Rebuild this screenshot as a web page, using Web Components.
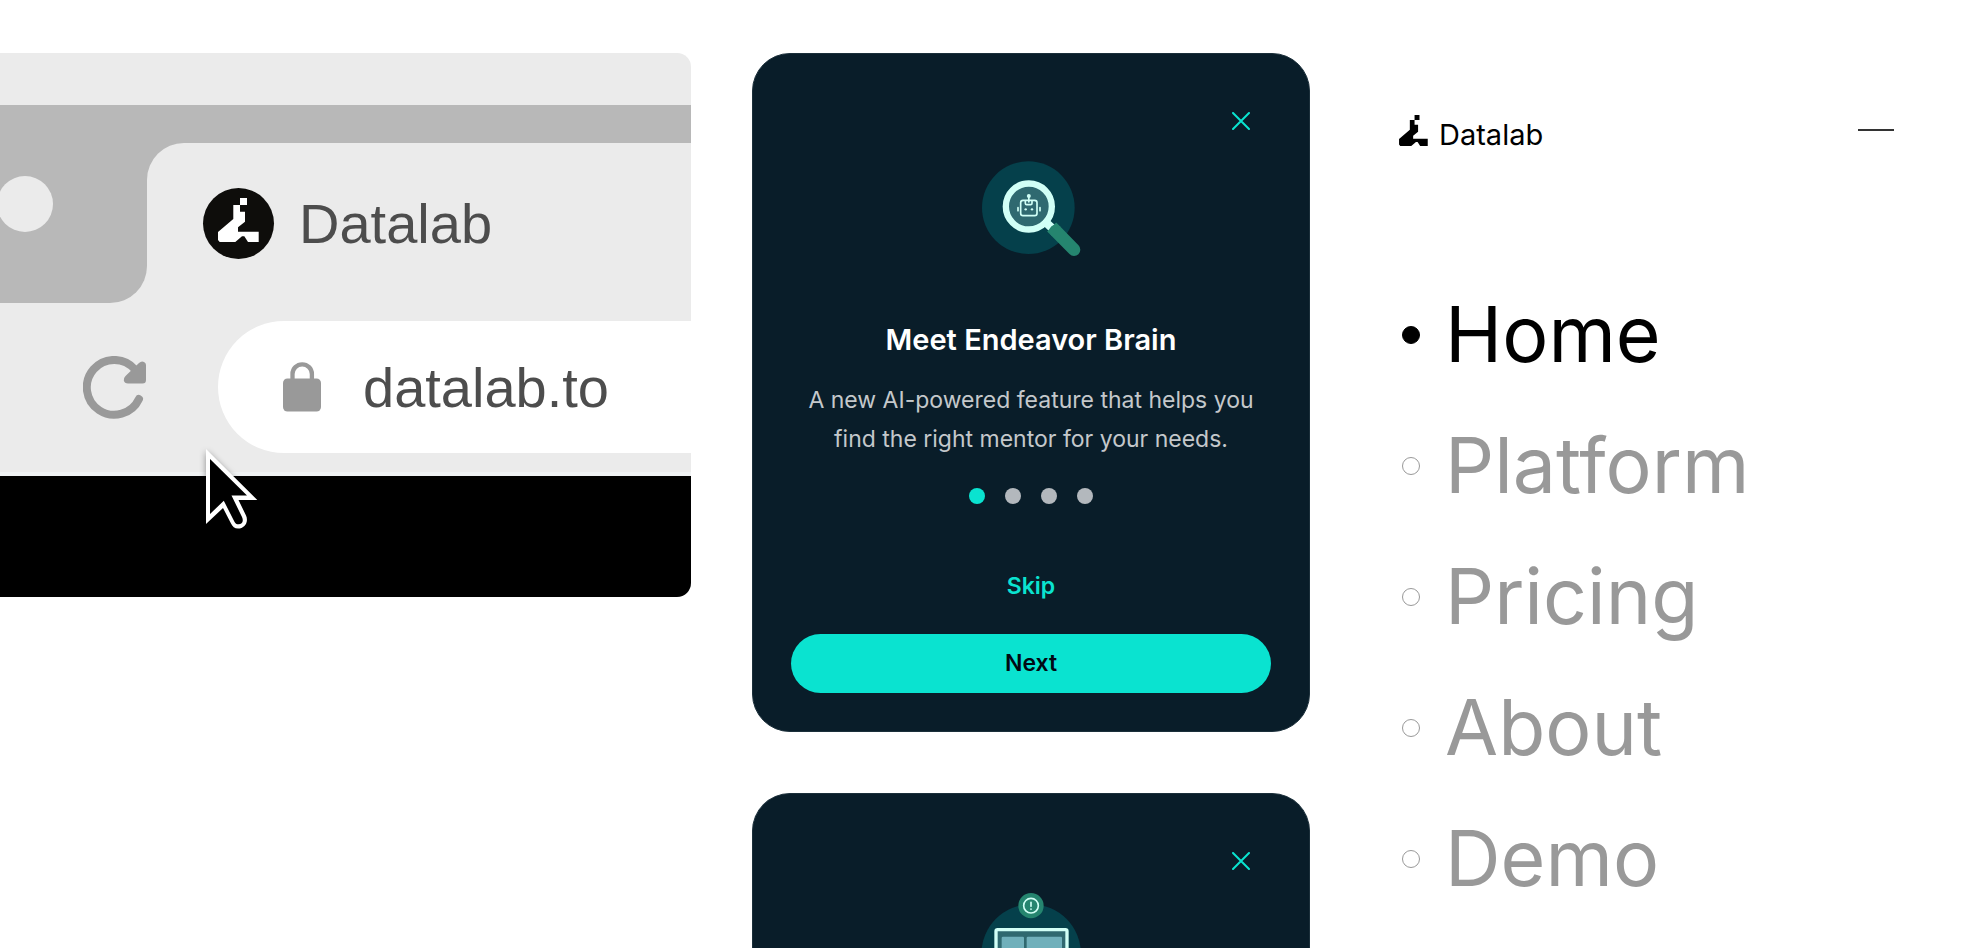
<!DOCTYPE html>
<html lang="en">
<head>
  <meta charset="utf-8">
  <meta name="viewport" content="width=device-width, initial-scale=1">
  <title>Datalab</title>
  <style>
    body {
      margin: 0;
      background-color: #ffffff;
      font-family: Inter, "Liberation Sans", sans-serif;
    }
  </style>
</head>
<body>
  <showcase-board>
    <browser-preview slot="browser" tab-title="Datalab" url="datalab.to"></browser-preview>

    <onboarding-card slot="cards">
      <svg slot="art" viewBox="64 36 300 318" width="100" height="106" fill="none" aria-hidden="true">
        <circle cx="206" cy="203" r="139" fill="#05404b"/>
        <path d="M254 243 279 266" stroke="#d1fff6" stroke-width="25"/>
        <circle cx="207.5" cy="199.5" r="69" fill="#2f6970" stroke="#d1fff6" stroke-width="19"/>
        <path d="M276 261 289 274" stroke="#25856f" stroke-width="38"/>
        <path d="M288 273 343 329" stroke="#25856f" stroke-width="38" stroke-linecap="round"/>
        <g stroke="#d1fff6" stroke-width="5" stroke-linecap="round">
          <rect x="183" y="181" width="49" height="46" rx="7"/>
          <path d="M207.500 170V186M197 183V190Q197 194 201 194H213Q217 194 217 190V183M175 203V212M241 203V212"/>
        </g>
        <g fill="#d1fff6">
          <circle cx="207.500" cy="168" r="6"/>
          <circle cx="198" cy="208" r="3.500"/>
          <circle cx="217" cy="208" r="3.500"/>
        </g>
      </svg>
      <span slot="title">Meet Endeavor Brain</span>
      <span slot="text">A new AI-powered feature that helps you find the right mentor for your needs.</span>
    </onboarding-card>

    <onboarding-card slot="cards" peek>
      <svg slot="art" viewBox="124 336 300 318" width="100" height="106" fill="none" aria-hidden="true">
        <circle cx="274.500" cy="522" r="149.500" fill="#05404b"/>
        <rect x="169" y="449" width="213" height="150" rx="5" fill="#2f6970" stroke="#d1fff6" stroke-width="10"/>
        <rect x="186" y="470" width="67" height="100" rx="4" fill="#70b0bb"/>
        <rect x="261" y="470" width="106" height="100" rx="4" fill="#70b0bb"/>
        <circle cx="274" cy="377" r="38" fill="#25856f"/>
        <circle cx="274" cy="377" r="22" stroke="#d1fff6" stroke-width="5"/>
        <path d="M274 367V379M274 387V388" stroke="#d1fff6" stroke-width="5" stroke-linecap="round"/>
      </svg>
    </onboarding-card>

    <site-menu slot="menu">
      <menu-link current>Home</menu-link>
      <menu-link>Platform</menu-link>
      <menu-link>Pricing</menu-link>
      <menu-link>About</menu-link>
      <menu-link>Demo</menu-link>
    </site-menu>
  </showcase-board>

  <script>
    class ShowcaseBoard extends HTMLElement {
      constructor() {
        super();
        this.attachShadow({ mode: "open" });
      }

      connectedCallback() {
        this.shadowRoot.innerHTML = `
          <style>
            :host {
              display: block;
            }
            main {
              display: grid;
              grid-template-columns: 691fr 558fr 609fr;
              gap: 61px;
              height: calc(100vh - 1px);
              padding-top: 53px;
              box-sizing: border-box;
              overflow: hidden;
            }
            .column {
              display: flex;
              flex-direction: column;
              gap: 61px;
              min-width: 0;
              min-height: 0;
            }
          </style>
          <main>
            <div class="column"><slot name="browser"></slot></div>
            <div class="column"><slot name="cards"></slot></div>
            <div class="column"><slot name="menu"></slot></div>
          </main>
        `;
      }
    }

    // Datalab mark, takes the colour of its parent
    class LabMark extends HTMLElement {
      constructor() {
        super();
        this.attachShadow({ mode: "open" });
      }

      connectedCallback() {
        this.shadowRoot.innerHTML = `
          <style>
            :host {
              display: block;
              flex: none;
            }
            svg {
              display: block;
              width: 100%;
              height: 100%;
            }
          </style>
          <svg viewBox="14 10 41 44" fill="currentColor" aria-hidden="true">
            <path d="M36 10h7v7h-7zM29.300 17H36v6.700h5v10L34 39.300v4.400h20.700V54H44l-3.700-5.700H38L31.300 54H15.700L14 52v-8L29.300 31z"/>
          </svg>
        `;
      }
    }

    class BrowserPreview extends HTMLElement {
      constructor() {
        super();
        this.attachShadow({ mode: "open" });
      }

      connectedCallback() {
        this.shadowRoot.innerHTML = `
          <style>
            :host {
              display: block;
              position: relative;
              background-color: #ebebeb;
              border-radius: 0 14px 14px 0;
              overflow: hidden;
              font-family: "Liberation Sans", sans-serif;
              font-size: 56px;
              color: #4d4d4d;
            }
            .strip {
              margin-top: 52px;
              height: 38px;
              background-color: #b8b8b8;
            }
            .tabs {
              display: flex;
              height: 160px;
              background: linear-gradient(#b8b8b8 50%, #ebebeb 50%);
            }
            .previous {
              display: flex;
              align-items: center;
              width: 147px;
              padding-bottom: 38px;
              box-sizing: border-box;
              background-color: #b8b8b8;
              border-bottom-right-radius: 37px;
            }
            .previous span {
              width: 56px;
              height: 56px;
              margin-left: -3px;
              border-radius: 50%;
              background-color: #ebebeb;
            }
            .tab {
              flex: 1;
              display: flex;
              align-items: center;
              gap: 25px;
              padding: 0 0 0 56px;
              border: none;
              border-top-left-radius: 37px;
              background-color: #ebebeb;
              font: inherit;
              color: inherit;
            }
            .favicon {
              display: grid;
              place-items: center;
              width: 71px;
              height: 71px;
              border-radius: 50%;
              background-color: #0e0d0b;
              color: #ffffff;
            }
            .favicon lab-mark {
              width: 41px;
              height: 44px;
              margin-bottom: 7px;
            }
            .toolbar {
              display: flex;
              align-items: center;
              gap: 72px;
              padding: 18px 0 19px 83px;
            }
            .reload {
              padding: 0;
              border: none;
              background: none;
            }
            svg {
              display: block;
              flex: none;
            }
            .address {
              flex: 1;
              display: flex;
              align-items: center;
              gap: 42px;
              height: 132px;
              padding-left: 65px;
              border-radius: 66px 0 0 66px;
              background-color: #ffffff;
            }
            input {
              flex: 1;
              min-width: 0;
              padding: 0;
              border: none;
              outline: none;
              background: none;
              font: inherit;
              color: inherit;
            }
            .page {
              height: 121px;
              border-top: 4px solid #f0f2f3;
              background-color: #000000;
            }
            .cursor {
              position: absolute;
              left: 206px;
              top: 396px;
              overflow: visible;
              filter: drop-shadow(0 2px 3px rgba(0, 0, 0, 0.4));
            }
          </style>
          <div class="strip"></div>
          <div class="tabs" role="tablist">
            <div class="previous"><span></span></div>
            <button class="tab" role="tab" aria-selected="true">
              <span class="favicon"><lab-mark></lab-mark></span>
              <span>${this.getAttribute("tab-title")}</span>
            </button>
          </div>
          <div class="toolbar">
            <button class="reload" aria-label="Reload">
              <svg width="63" height="63" viewBox="0 0 63 63" fill="none">
                <path d="M56 43A27.400 27.400 0 1 1 52 13.500" stroke="#999999" stroke-width="8" stroke-linecap="round"/>
                <path d="M63 9V24Q63 27.500 59.500 27.500H45Q41.500 27.500 40.800 24.500Q40.500 22 42.500 20L56 7Q58.500 4.500 61 6Q63 7 63 9Z" fill="#999999"/>
              </svg>
            </button>
            <label class="address">
              <svg width="38" height="50" viewBox="0 0 38 50" fill="none" aria-hidden="true">
                <path d="M9.500 20V12A9.700 9.700 0 0 1 28.900 12V20" stroke="#999999" stroke-width="4.300"/>
                <rect y="16.500" width="38" height="33" rx="4.500" fill="#999999"/>
              </svg>
              <input type="text" aria-label="Address" value="${this.getAttribute("url")}">
            </label>
          </div>
          <div class="page"></div>
          <svg class="cursor" width="52" height="80" viewBox="0 0 52 80" aria-hidden="true">
            <path d="M0 0 51.300 51H32.500L40 66.500C43 73 38.500 79.500 32 79.500C28.500 79.500 26.500 77.500 25 74.500L17 59 0 75Z" fill="#ffffff"/>
            <path d="M4 10 41 46.500H25.500L36 68C38 72.500 36 75.300 32.500 75.300C30.500 75.300 29.300 74.500 28.300 72.500L17.800 51.700 4 65Z" fill="#000000"/>
          </svg>
        `;
      }
    }

    class OnboardingCard extends HTMLElement {
      constructor() {
        super();
        this.attachShadow({ mode: "open" });
      }

      connectedCallback() {
        this.shadowRoot.innerHTML = `
          <style>
            :host {
              display: flex;
              flex-direction: column;
              align-items: center;
              flex: none;
              box-sizing: border-box;
              padding: 52px 38px 38px;
              border: 1px solid #1b2f3a;
              border-radius: 38px;
              background-color: #091d29;
              overflow: hidden;
            }
            /* next card in the stack, cut off by the window */
            :host([peek]) {
              flex: 1 1 0;
              min-height: 0;
              padding-bottom: 0;
              border-bottom: none;
              border-radius: 38px 38px 0 0;
            }
            :host([peek]) .body {
              display: none;
            }
            ::slotted(svg) {
              flex: none;
            }
            button {
              padding: 0;
              border: none;
              background: none;
              font: 600 23px/59px Inter, sans-serif;
              cursor: pointer;
            }
            .close {
              display: grid;
              place-items: center;
              flex: none;
              align-self: flex-end;
              width: 30px;
              height: 30px;
              margin: 0 15px 16px 0;
            }
            .body {
              display: flex;
              flex-direction: column;
              align-items: center;
              align-self: stretch;
              padding-top: 64px;
            }
            h2 {
              margin: 0 0 23px;
              font-size: 29px;
              font-weight: 600;
              line-height: 36px;
              color: #ffffff;
            }
            p {
              margin: 0 0 29px;
              max-width: 456px;
              font-size: 23px;
              line-height: 39px;
              text-align: center;
              color: #c4c8cb;
            }
            .dots {
              display: flex;
              gap: 20px;
              margin-bottom: 53px;
            }
            .dots button {
              width: 16px;
              height: 16px;
              border-radius: 50%;
              background-color: #b3b8bd;
            }
            .dots button[aria-current] {
              background-color: #0ae3d0;
            }
            .skip {
              margin-bottom: 18px;
              color: #0ae3d0;
            }
            .next {
              align-self: stretch;
              border-radius: 30px;
              background-color: #0ae3d0;
              color: #020a14;
            }
          </style>
          <button class="close" aria-label="Close">
            <svg width="18" height="18" viewBox="0 0 18 18" stroke="#0ae3d0" stroke-width="2" stroke-linecap="round">
              <path d="M1 1 17 17M17 1 1 17"/>
            </svg>
          </button>
          <slot name="art"></slot>
          <div class="body">
            <h2><slot name="title"></slot></h2>
            <p><slot name="text"></slot></p>
            <div class="dots">
              <button aria-label="Step 1" aria-current="step"></button>
              <button aria-label="Step 2"></button>
              <button aria-label="Step 3"></button>
              <button aria-label="Step 4"></button>
            </div>
            <button class="skip">Skip</button>
            <button class="next">Next</button>
          </div>
        `;
      }
    }

    class SiteMenu extends HTMLElement {
      constructor() {
        super();
        this.attachShadow({ mode: "open" });
      }

      connectedCallback() {
        this.shadowRoot.innerHTML = `
          <style>
            :host {
              display: block;
              padding: 62px 86px 0 28px;
              color: #000000;
            }
            header {
              display: flex;
              align-items: flex-start;
              justify-content: space-between;
              margin-bottom: 123px;
            }
            .brand {
              display: flex;
              align-items: flex-end;
              gap: 11px;
              font-size: 29px;
              line-height: 22px;
              color: inherit;
              text-decoration: none;
            }
            .brand lab-mark {
              width: 29px;
              height: 31px;
            }
            .toggle {
              display: flex;
              align-items: center;
              width: 36px;
              height: 30px;
              padding: 0;
              border: none;
              background: none;
            }
            .toggle span {
              flex: 1;
              height: 2px;
              background-color: #333333;
            }
            nav {
              display: flex;
              flex-direction: column;
              padding-left: 3px;
            }
          </style>
          <header>
            <a class="brand" href="#"><lab-mark></lab-mark><span>Datalab</span></a>
            <button class="toggle" aria-label="Close menu"><span></span></button>
          </header>
          <nav><slot></slot></nav>
        `;
      }
    }

    class MenuLink extends HTMLElement {
      constructor() {
        super();
        this.attachShadow({ mode: "open" });
      }

      connectedCallback() {
        this.shadowRoot.innerHTML = `
          <style>
            :host {
              display: block;
            }
            a {
              display: flex;
              align-items: center;
              gap: 25px;
              font-size: 77px;
              line-height: 131px;
              color: #999999;
              text-decoration: none;
            }
            .bullet {
              width: 18px;
              height: 18px;
              box-sizing: border-box;
              border: 1px solid currentColor;
              border-radius: 50%;
            }
            :host([current]) a {
              color: #000000;
            }
            :host([current]) .bullet {
              background-color: currentColor;
            }
          </style>
          <a href="#"><span class="bullet"></span><span><slot></slot></span></a>
        `;
      }
    }

    customElements.define("lab-mark", LabMark);
    customElements.define("browser-preview", BrowserPreview);
    customElements.define("onboarding-card", OnboardingCard);
    customElements.define("menu-link", MenuLink);
    customElements.define("site-menu", SiteMenu);
    customElements.define("showcase-board", ShowcaseBoard);
  </script>
</body>
</html>
